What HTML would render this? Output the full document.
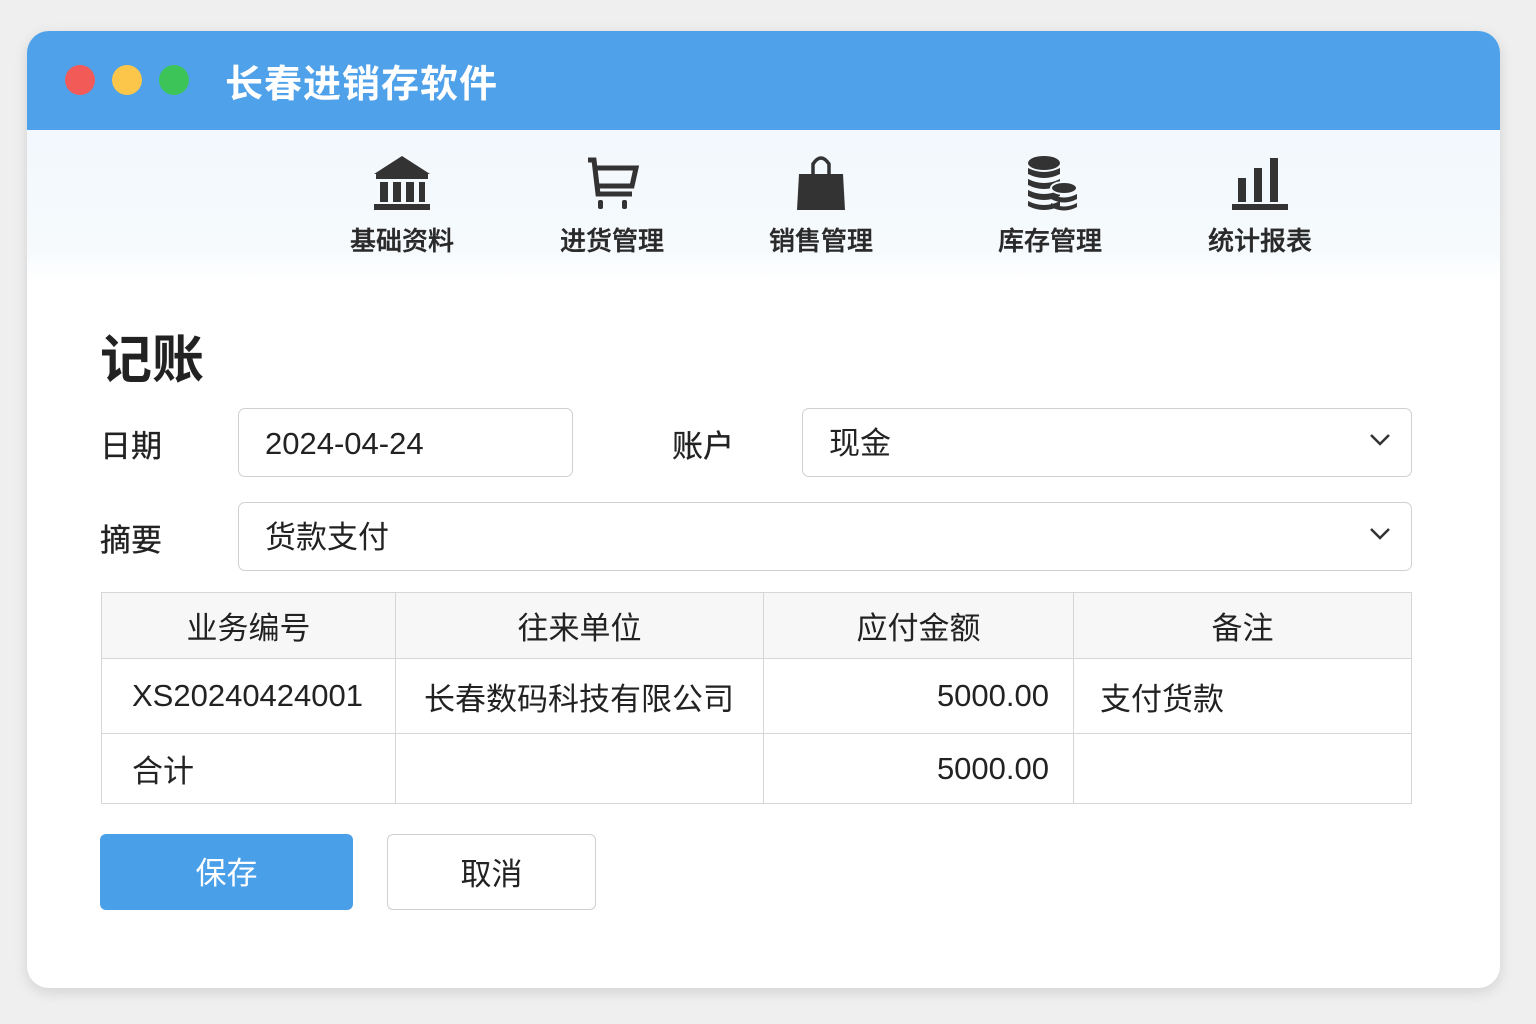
<!DOCTYPE html>
<html><head><meta charset="utf-8"><style>
*{margin:0;padding:0;box-sizing:border-box}
body{width:1536px;height:1024px;background:#efefef;font-family:"Liberation Sans","Noto Sans CJK SC",sans-serif;color:#222;position:relative;overflow:hidden}
.win{position:absolute;left:27px;top:31px;width:1473px;height:957px;background:#fff;border-radius:22px;overflow:hidden;box-shadow:0 4px 14px rgba(0,0,0,.12)}
.hdr{position:absolute;left:0;top:0;width:100%;height:99px;background:#4fa1e9}
.dot{position:absolute;top:34px;width:30px;height:30px;border-radius:50%}
.title{position:absolute;left:198px;top:22px;font-size:38px;font-weight:bold;color:#fff;letter-spacing:1px}
.tb{position:absolute;left:0;top:99px;width:100%;height:150px;background:linear-gradient(#f2f8fd,#f6fafd 80%,#fff)}
.it{position:absolute;top:0;width:160px;text-align:center}
.it svg{position:absolute;left:50px;top:24px}
.it span{position:absolute;left:0;width:160px;top:91px;font-size:26px;color:#2a2a2a;font-weight:500;-webkit-text-stroke:0.4px #2a2a2a}
.a{position:absolute}
.lbl{font-size:31px;color:#222;-webkit-text-stroke:0.3px #222}
.box{position:absolute;border:1.5px solid #d0d0d0;border-radius:7px;background:#fff;font-size:31px;padding-left:26px;line-height:70px}
.chev{position:absolute;right:20px;top:24px}
table{position:absolute;left:101px;top:592px;width:1311px;border-collapse:collapse;font-size:31px}
td{border:1.5px solid #d6d6d6}
.btn{position:absolute;top:834px;height:76px;border-radius:6px;font-size:31px;text-align:center;line-height:80px}
</style></head><body>
<div class="win">
<div class="hdr">
<div class="dot" style="left:38px;background:#f25a57"></div>
<div class="dot" style="left:85px;background:#fcc64a"></div>
<div class="dot" style="left:132px;background:#3cc458"></div>
<div class="title">长春进销存软件</div>
</div>
<div class="tb">
<div class="it" style="left:295px"><svg width="60" height="58" viewBox="0 0 60 58"><path d="M30 2L2 20H58Z" fill="#333"/><rect x="4" y="20" width="52" height="5" fill="#333"/><rect x="8" y="28" width="8" height="20" fill="#333"/><rect x="21" y="28" width="8" height="20" fill="#333"/><rect x="34" y="28" width="8" height="20" fill="#333"/><rect x="47" y="28" width="6" height="20" fill="#333"/><rect x="2" y="50" width="56" height="6" fill="#333"/></svg><span>基础资料</span></div>
<div class="it" style="left:505px"><svg width="60" height="58" viewBox="0 0 60 58"><path d="M6 6H12L16 40H50M15 14H54L50 32H16" fill="none" stroke="#333" stroke-width="5"/><rect x="16" y="46" width="5" height="9" rx="2" fill="#333"/><rect x="40" y="46" width="5" height="9" rx="2" fill="#333"/></svg><span>进货管理</span></div>
<div class="it" style="left:714px"><svg width="60" height="58" viewBox="0 0 60 58"><path d="M8 20H52L54 56H6Z" fill="#333"/><path d="M22 24V10Q30 -2 38 10V24" fill="none" stroke="#333" stroke-width="3.5"/></svg><span>销售管理</span></div>
<div class="it" style="left:943px"><svg width="60" height="58" viewBox="0 0 60 58"><ellipse cx="24" cy="9" rx="16" ry="7" fill="#333"/><path d="M8 14v6q16 8 32 0v-6q-16 8-32 0zM8 25v6q16 8 32 0v-6q-16 8-32 0zM8 36v6q16 8 32 0v-6q-16 8-32 0zM8 47v5q16 8 32 0v-5q-16 8-32 0z" fill="#333"/><ellipse cx="44" cy="34" rx="13" ry="6" fill="#333" stroke="#f4f9fd" stroke-width="2"/><path d="M31 40v5q13 7 26 0v-5q-13 7-26 0zM31 49v4q13 7 26 0v-4q-13 7-26 0z" fill="#333"/></svg><span>库存管理</span></div>
<div class="it" style="left:1153px"><svg width="60" height="58" viewBox="0 0 60 58"><rect x="8" y="24" width="8" height="24" fill="#333"/><rect x="24" y="14" width="8" height="34" fill="#333"/><rect x="40" y="4" width="8" height="44" fill="#333"/><rect x="2" y="50" width="56" height="6" fill="#333"/></svg><span>统计报表</span></div>
</div>
</div>
<div class="a" style="left:100px;top:318px;font-size:52px;font-weight:bold;color:#222">记账</div>
<div class="a lbl" style="left:100px;top:421px">日期</div>
<div class="box" style="left:238px;top:408px;width:335px;height:69px">2024-04-24</div>
<div class="a lbl" style="left:672px;top:421px">账户</div>
<div class="box" style="left:802px;top:408px;width:610px;height:69px">现金<svg class="chev" width="22" height="14" viewBox="0 0 22 14"><path d="M2 2L11 11L20 2" fill="none" stroke="#333" stroke-width="2.5"/></svg></div>
<div class="a lbl" style="left:100px;top:515px">摘要</div>
<div class="box" style="left:238px;top:502px;width:1174px;height:69px">货款支付<svg class="chev" width="22" height="14" viewBox="0 0 22 14"><path d="M2 2L11 11L20 2" fill="none" stroke="#333" stroke-width="2.5"/></svg></div>
<table>
<tr style="height:66px;background:#f7f7f7;text-align:center"><td style="width:294px">业务编号</td><td style="width:368px">往来单位</td><td style="width:310px">应付金额</td><td>备注</td></tr>
<tr style="height:75px"><td style="padding-left:30px">XS20240424001</td><td style="padding-left:28px">长春数码科技有限公司</td><td style="text-align:right;padding-right:24px">5000.00</td><td style="padding-left:26px">支付货款</td></tr>
<tr style="height:70px"><td style="padding-left:30px">合计</td><td></td><td style="text-align:right;padding-right:24px">5000.00</td><td></td></tr>
</table>
<div class="btn" style="left:100px;width:253px;background:#4a9fe9;color:#fff">保存</div>
<div class="btn" style="left:387px;width:209px;border:1.5px solid #d0d0d0;background:#fff;color:#222">取消</div>
</body></html>
